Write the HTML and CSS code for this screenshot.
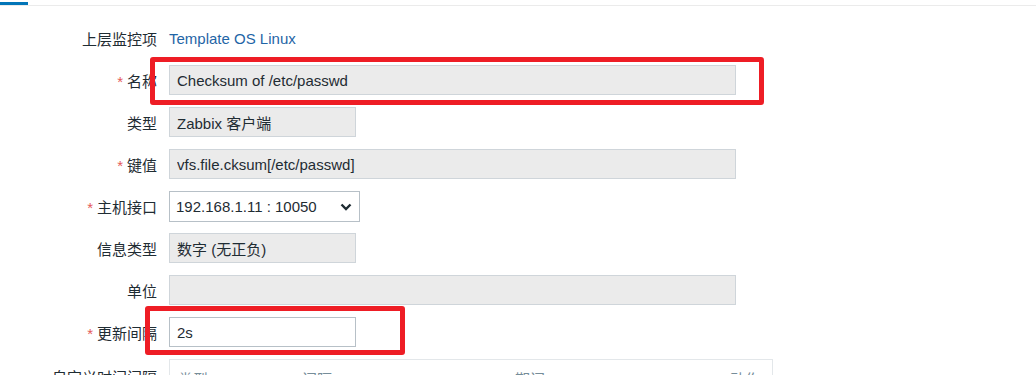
FILE: index.html
```html
<!DOCTYPE html>
<html lang="zh-CN">
<head>
    <meta charset="UTF-8">
    <title>监控项</title>
    <link rel="stylesheet" href="styles.css">
</head>
<body>
    <div class="tabs">
        <div class="tab-active"></div>
    </div>

    <div class="item-form">
        <div class="form-row">
            <label class="form-label">上层监控项</label>
            <div class="form-field">
                <a href="#" class="link">Template OS Linux</a>
            </div>
        </div>

        <div class="form-row">
            <label class="form-label"><span class="req">*</span>名称</label>
            <div class="form-field">
                <input class="text-box wide readonly" type="text" value="Checksum of /etc/passwd" readonly>
                <div class="mark mark-name"></div>
            </div>
        </div>

        <div class="form-row">
            <label class="form-label">类型</label>
            <div class="form-field">
                <input class="text-box narrow readonly" type="text" value="Zabbix 客户端" readonly>
            </div>
        </div>

        <div class="form-row">
            <label class="form-label"><span class="req">*</span>键值</label>
            <div class="form-field">
                <input class="text-box wide readonly" type="text" value="vfs.file.cksum[/etc/passwd]" readonly>
            </div>
        </div>

        <div class="form-row">
            <label class="form-label"><span class="req">*</span>主机接口</label>
            <div class="form-field">
                <div class="select-box">
                    <span>192.168.1.11 : 10050</span>
                    <svg class="chevron" width="12" height="8" viewBox="0 0 12 8">
                        <path d="M1.5 1.5 L6 6 L10.5 1.5" fill="none" stroke="#1f2c33" stroke-width="2.4"/>
                    </svg>
                </div>
            </div>
        </div>

        <div class="form-row">
            <label class="form-label">信息类型</label>
            <div class="form-field">
                <input class="text-box narrow readonly" type="text" value="数字 (无正负)" readonly>
            </div>
        </div>

        <div class="form-row">
            <label class="form-label">单位</label>
            <div class="form-field">
                <input class="text-box wide readonly" type="text" value="" readonly>
            </div>
        </div>

        <div class="form-row">
            <label class="form-label"><span class="req">*</span>更新间隔</label>
            <div class="form-field">
                <input class="text-box narrow" type="text" value="2s">
                <div class="mark mark-interval"></div>
            </div>
        </div>

        <div class="form-row top">
            <label class="form-label">自定义时间间隔</label>
            <div class="form-field">
                <div class="interval-table">
                    <span class="col-type">类型</span>
                    <span class="col-interval">间隔</span>
                    <span class="col-period">期间</span>
                    <span class="col-action">动作</span>
                </div>
            </div>
        </div>
    </div>
</body>
</html>
```

FILE: styles.css
```css
* {
    margin: 0;
    padding: 0;
    box-sizing: border-box;
}

body {
    font-family: 'Liberation Sans', Arial, 'Noto Sans CJK SC', sans-serif;
    font-size: 15px;
    color: #1f2c33;
    background: #ffffff;
    overflow: hidden;
}

/* Вкладки */
.tabs {
    height: 6px;
    border-bottom: 1px solid #ebebeb;
    padding-top: 2px;
}

.tab-active {
    width: 28px;
    height: 3px;
    background: #0275b8;
}

/* Форма */
.item-form {
    display: flex;
    flex-direction: column;
    gap: 12px;
    margin-top: 17px;
}

.form-row {
    display: grid;
    grid-template-columns: 157px 1fr;
    column-gap: 12px;
    height: 30px;
    align-items: center;
}

.form-label {
    text-align: right;
    white-space: nowrap;
}

.form-row.top .form-label {
    align-self: start;
    padding-top: 7px;
}

.req {
    color: #e45959;
    margin-right: 4px;
}

.form-field {
    position: relative;
    height: 30px;
    display: flex;
    align-items: center;
}

.link {
    color: #1f65a6;
    text-decoration: none;
}

.text-box {
    height: 30px;
    border: 1px solid #b7c0c7;
    background: #ffffff;
    padding: 0 7px;
    font: inherit;
    color: #1f2c33;
    outline: none;
}

.text-box.readonly {
    background: #ebebeb;
    border-color: #cfd5da;
}

.text-box.wide {
    width: 567px;
}

.text-box.narrow {
    width: 187px;
}

.select-box {
    width: 191px;
    height: 31px;
    border: 1px solid #b7c0c7;
    display: flex;
    align-items: center;
    justify-content: space-between;
    padding: 0 7px 0 6px;
}

.chevron {
    margin-top: 1px;
}

/* Червоні позначки */
.mark {
    position: absolute;
    border: 5px solid #ee1d25;
    border-radius: 3px;
}

.mark-name {
    left: -19px;
    top: -8px;
    width: 614px;
    height: 48px;
}

.mark-interval {
    left: -24px;
    top: -11px;
    width: 260px;
    height: 49px;
}

/* Таблиця інтервалів */
.interval-table {
    align-self: start;
    width: 604px;
    height: 60px;
    border: 1px solid #e3e7ea;
    position: relative;
    color: #768d99;
    padding-top: 8px;
}

.interval-table span {
    position: absolute;
    top: 8px;
}

.col-type { left: 8px; }
.col-interval { left: 132px; }
.col-period { left: 345px; }
.col-action { left: 560px; }
```
